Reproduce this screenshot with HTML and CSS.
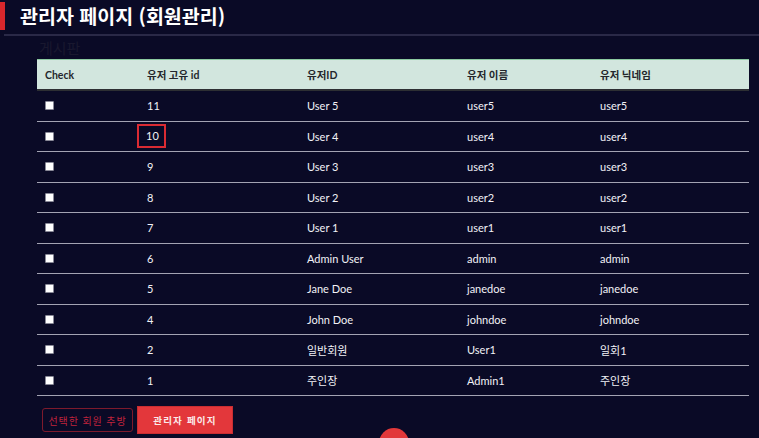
FILE: index.html
```html
<!DOCTYPE html>
<html lang="ko">
<head>
<meta charset="utf-8">
<title>관리자 페이지 (회원관리)</title>
<link rel="stylesheet" href="styles.css">
</head>
<body>
<header class="page-header">
  <span class="accent"></span>
  <h1 class="title">관리자 페이지 (회원관리)</h1>
</header>
<main class="content">
  <div class="ghost">게시판</div>
  <table class="users">
    <colgroup>
      <col class="c1"><col class="c2"><col class="c3"><col class="c4"><col class="c5">
    </colgroup>
    <thead>
      <tr><th>Check</th><th>유저 고유 id</th><th>유저ID</th><th>유저 이름</th><th>유저 닉네임</th></tr>
    </thead>
    <tbody>
      <tr><td><span class="cb"></span></td><td>11</td><td>User 5</td><td>user5</td><td>user5</td></tr>
      <tr><td><span class="cb"></span></td><td><span class="hl">10</span></td><td>User 4</td><td>user4</td><td>user4</td></tr>
      <tr><td><span class="cb"></span></td><td>9</td><td>User 3</td><td>user3</td><td>user3</td></tr>
      <tr><td><span class="cb"></span></td><td>8</td><td>User 2</td><td>user2</td><td>user2</td></tr>
      <tr><td><span class="cb"></span></td><td>7</td><td>User 1</td><td>user1</td><td>user1</td></tr>
      <tr><td><span class="cb"></span></td><td>6</td><td>Admin User</td><td>admin</td><td>admin</td></tr>
      <tr><td><span class="cb"></span></td><td>5</td><td>Jane Doe</td><td>janedoe</td><td>janedoe</td></tr>
      <tr><td><span class="cb"></span></td><td>4</td><td>John Doe</td><td>johndoe</td><td>johndoe</td></tr>
      <tr><td><span class="cb"></span></td><td>2</td><td>일반회원</td><td>User1</td><td>일회1</td></tr>
      <tr><td><span class="cb"></span></td><td>1</td><td>주인장</td><td>Admin1</td><td>주인장</td></tr>
    </tbody>
  </table>
  <div class="actions">
    <button class="btn-outline">선택한 회원 추방</button>
    <button class="btn-fill">관리자 페이지</button>
  </div>
  <span class="fab"></span>
</main>
</body>
</html>
```

FILE: styles.css
```css
html, body {
  margin: 0;
  padding: 0;
  background: #0a0a26;
  height: 100%;
  overflow: hidden;
}
body {
  font-family: Lato, "Noto Sans CJK KR", sans-serif;
  color: #f2f2f6;
  position: relative;
}
.page-header {
  display: flex;
  align-items: center;
  height: 34px;
  border-bottom: 2px solid #2a2947;
  margin-left: 4px;
  position: relative;
}
.accent {
  position: absolute;
  left: -4px;
  top: 2px;
  width: 5px;
  height: 28px;
  background: #d8272c;
}
.title {
  margin: 0 0 0 16px;
  font-family: "Noto Sans CJK KR", sans-serif;
  font-size: 19.5px;
  font-weight: 700;
  color: #ffffff;
  line-height: 30px;
  padding-bottom: 2px;
}
.content {
  padding: 0 10px 0 37px;
}
.ghost {
  font-family: "Noto Sans CJK KR", sans-serif;
  font-size: 15px;
  line-height: 23px;
  height: 23px;
  color: #19182f;
  margin-left: 2px;
}
.users {
  width: 712px;
  border-collapse: collapse;
  table-layout: fixed;
  font-size: 11px;
}
.c1 { width: 102px; }
.c2 { width: 160px; }
.c3 { width: 160px; }
.c4 { width: 133px; }
.c5 { width: 157px; }
.users thead tr {
  background: #d2e6de;
  border-top: 1px solid #8ccaa0;
  border-bottom: 2px solid #2d2f33;
}
.users th {
  text-align: left;
  font-weight: 700;
  font-size: 10.5px;
  color: #24262c;
  height: 29px;
  padding: 0 0 0 8px;
}
.users td {
  height: 29.5px;
  padding: 0 0 0 8px;
  border-bottom: 1.5px solid #a3a3b3;
  color: #f2f2f6;
  vertical-align: middle;
}
.cb {
  display: block;
  width: 7px;
  height: 7px;
  background: #ffffff;
  border: 1px solid #8a8a98;
  border-radius: 1px;
}
.hl {
  display: inline-block;
  margin-left: -10px;
  padding: 3px 5px 3px 7px;
  border: 2px solid #db2b33;
  line-height: 14px;
}
.actions {
  display: flex;
  align-items: center;
  gap: 4px;
  margin-top: 10px;
  margin-left: 5px;
}
.btn-outline {
  font-family: "Noto Sans CJK KR", sans-serif;
  height: 24px;
  width: 91px;
  padding: 0;
  background: transparent;
  border: 1px solid #7e1a2c;
  border-radius: 3px;
  color: #c0233c;
  font-size: 10px;
  letter-spacing: 0.9px;
}
.btn-fill {
  font-family: "Noto Sans CJK KR", sans-serif;
  height: 28px;
  width: 96px;
  padding: 0;
  background: #e3373b;
  border: 1px solid #c92d31;
  color: #fbeaea;
  font-size: 9.5px;
  font-weight: 700;
  letter-spacing: 1.2px;
}
.fab {
  position: absolute;
  left: 379px;
  top: 428px;
  width: 30px;
  height: 30px;
  border-radius: 50%;
  background: #e2383a;
}
```
